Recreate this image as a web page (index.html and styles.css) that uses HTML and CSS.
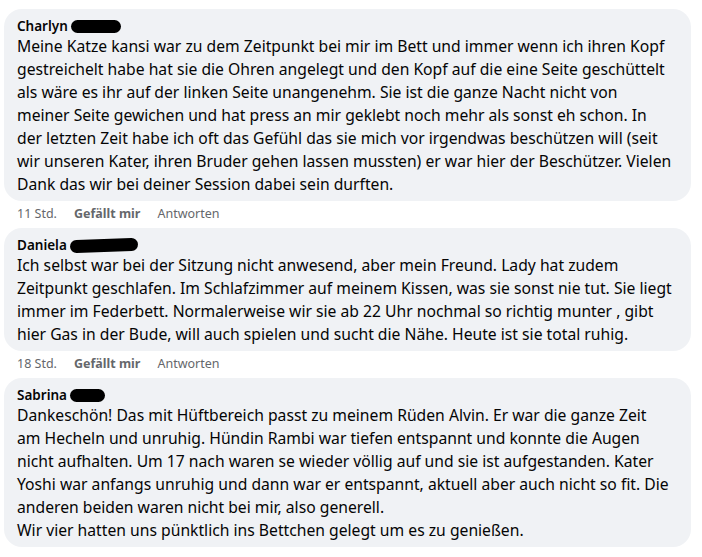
FILE: index.html
```html
<!DOCTYPE html>
<html lang="de">
<head>
  <meta charset="UTF-8" />
  <title>Kommentare</title>
  <link rel="stylesheet" href="styles.css">
</head>
<body>
  <div class="comments">
    <div class="comment">
      <div class="bubble">
        <div class="author">Charlyn <span class="redact redact-a"></span></div>
        <p class="text">Meine Katze kansi war zu dem Zeitpunkt bei mir im Bett und immer wenn ich ihren Kopf<br>
gestreichelt habe hat sie die Ohren angelegt und den Kopf auf die eine Seite geschüttelt<br>
als wäre es ihr auf der linken Seite unangenehm. Sie ist die ganze Nacht nicht von<br>
meiner Seite gewichen und hat press an mir geklebt noch mehr als sonst eh schon. In<br>
der letzten Zeit habe ich oft das Gefühl das sie mich vor irgendwas beschützen will (seit<br>
wir unseren Kater, ihren Bruder gehen lassen mussten) er war hier der Beschützer. Vielen<br>
Dank das wir bei deiner Session dabei sein durften.</p>
      </div>
      <div class="meta"><span>11 Std.</span><span class="like">Gefällt mir</span><span>Antworten</span></div>
    </div>

    <div class="comment">
      <div class="bubble">
        <div class="author">Daniela <span class="redact redact-b"></span></div>
        <p class="text">Ich selbst war bei der Sitzung nicht anwesend, aber mein Freund. Lady hat zudem<br>
Zeitpunkt geschlafen. Im Schlafzimmer auf meinem Kissen, was sie sonst nie tut. Sie liegt<br>
immer im Federbett. Normalerweise wir sie ab 22 Uhr nochmal so richtig munter , gibt<br>
hier Gas in der Bude, will auch spielen und sucht die Nähe. Heute ist sie total ruhig.</p>
      </div>
      <div class="meta"><span>18 Std.</span><span class="like">Gefällt mir</span><span>Antworten</span></div>
    </div>

    <div class="comment">
      <div class="bubble">
        <div class="author">Sabrina <span class="redact redact-c"></span></div>
        <p class="text">Dankeschön! Das mit Hüftbereich passt zu meinem Rüden Alvin. Er war die ganze Zeit<br>
am Hecheln und unruhig. Hündin Rambi war tiefen entspannt und konnte die Augen<br>
nicht aufhalten. Um 17 nach waren se wieder völlig auf und sie ist aufgestanden. Kater<br>
Yoshi war anfangs unruhig und dann war er entspannt, aktuell aber auch nicht so fit. Die<br>
anderen beiden waren nicht bei mir, also generell.<br>
Wir vier hatten uns pünktlich ins Bettchen gelegt um es zu genießen.</p>
      </div>
    </div>
  </div>
</body>
</html>
```

FILE: styles.css
```css
body {
  margin: 0;
  background: #fff;
  font-family: 'Noto Sans', 'Open Sans', sans-serif;
  color: #050505;
}
.comments {
  width: 687px;
  padding: 9px 0 0 4px;
}
.bubble {
  background: #f0f2f5;
  border-radius: 18px;
  padding: 8px 13px 5px;
}
.author {
  font-size: 13.5px;
  font-weight: 600;
  line-height: 18px;
  display: flex;
  align-items: center;
  gap: 3px;
}
.redact {
  display: inline-block;
  height: 13px;
  background: #000;
  border-radius: 7px;
}
.redact-a { width: 50px; }
.redact-b { width: 68px; transform: rotate(-2deg); }
.redact-c { width: 35px; }
.text {
  margin: 0;
  font-size: 15.7px;
  line-height: 23px;
  white-space: nowrap;
}
.meta {
  display: flex;
  gap: 17px;
  height: 27px;
  align-items: center;
  padding: 0 0 2px 13px;
  box-sizing: border-box;
  font-size: 12.5px;
  color: #65676b;
}
.meta .like {
  font-weight: 700;
}
```
